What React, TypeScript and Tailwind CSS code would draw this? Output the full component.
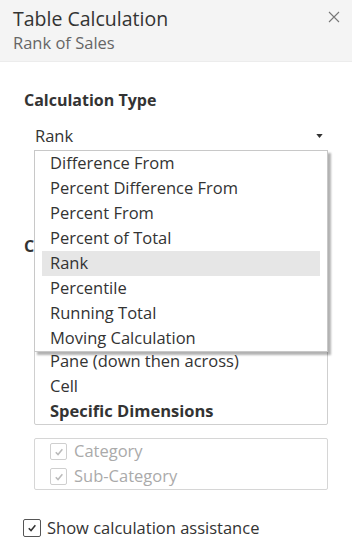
import { useState } from "react";

const types = [
    "Difference From",
    "Percent Difference From",
    "Percent From",
    "Percent of Total",
    "Rank",
    "Percentile",
    "Running Total",
    "Moving Calculation",
];

const computeUsing = [
    "Table (across)",
    "Table (down)",
    "Table (across then down)",
    "Table (down then across)",
    "Pane (across)",
    "Pane (down)",
    "Pane (across then down)",
    "Pane (down then across)",
    "Cell",
];

const Check = ({ className }: { className: string }) => (
    <svg viewBox="0 0 10 10" className={className} fill="none" stroke="currentColor" strokeWidth="1.3">
        <path d="M2.3 5.2 L4.2 7.1 L7.8 2.8" />
    </svg>
);

export default function App() {
    const [selected] = useState("Rank");
    const [assist, setAssist] = useState(true);

    return (
        <div className="w-[352px] h-[555px] bg-white text-[#333] font-['Open_Sans',sans-serif] overflow-hidden">
            <div className="h-[62px] bg-[#f4f4f4] border-b border-[#ececec] pl-[13px] pr-[8px] pt-[5px] flex justify-between">
                <div>
                    <div className="text-[19.5px] leading-[27px]">Table Calculation</div>
                    <div className="text-[16.5px] leading-[22px] text-[#666]">Rank of Sales</div>
                </div>
                <button className="w-[20px] h-[20px] mt-[2px] flex items-center justify-center text-[#777]">
                    <svg viewBox="0 0 12 12" className="w-[12px] h-[12px]" stroke="currentColor" strokeWidth="1.1">
                        <path d="M1 1 L11 11 M11 1 L1 11" />
                    </svg>
                </button>
            </div>

            <div className="px-[24px] pt-[27px]">
                <div className="text-[16px] font-bold leading-[22px]">Calculation Type</div>

                <div className="relative mt-[12px] ml-[10px]">
                    <div className="h-[26px] flex items-center justify-between pl-[1px] pr-[5px] text-[16.5px]">
                        <span>{selected}</span>
                        <svg viewBox="0 0 8 5" className="w-[7px] h-[4px] text-[#333]" fill="currentColor">
                            <path d="M0 0 H8 L4 5 Z" />
                        </svg>
                    </div>

                    <div className="absolute left-0 top-[27px] w-[294px] bg-white border border-[#c8c8c8] shadow-[3px_3px_2px_rgba(0,0,0,0.3)] px-[7px] z-10">
                        {types.map((t) => (
                            <div
                                key={t}
                                className={`h-[25px] flex items-center px-2 text-[16.5px] whitespace-nowrap ${t === selected ? "bg-[#e6e6e6]" : ""}`}
                            >
                                {t}
                            </div>
                        ))}
                    </div>
                </div>

                <div className="text-[16px] font-bold leading-[22px] mt-[86px]">Compute Using</div>

                <div className="ml-[10px] mt-[8px] h-[160px] border border-[#cfcfcf] rounded-[2px] overflow-hidden flex flex-col justify-end">
                    {computeUsing.map((c) => (
                        <div key={c} className="h-[25px] shrink-0 flex items-center px-[15px] text-[16.5px] whitespace-nowrap">
                            {c}
                        </div>
                    ))}
                    <div className="h-[25px] shrink-0 flex items-center px-[15px] text-[16.5px] font-bold">
                        Specific Dimensions
                    </div>
                </div>

                <div className="ml-[10px] mt-[13px] border border-[#d6d6d6] rounded-[2px] text-[#aaa]">
                    {["Category", "Sub-Category"].map((d) => (
                        <div key={d} className="h-[25px] flex items-center pl-[15px] gap-[7px] text-[16.5px]">
                            <span className="w-[17px] h-[17px] border border-[#cfcfcf] rounded-[2px] flex items-center justify-center text-[#bbb]">
                                <Check className="w-[12px] h-[12px]" />
                            </span>
                            {d}
                        </div>
                    ))}
                </div>

                <label className="mt-[26px] -ml-[1px] flex items-center gap-[6px] text-[16.5px] cursor-pointer">
                    <span
                        onClick={() => setAssist(!assist)}
                        className="w-[18px] h-[18px] border border-[#555] rounded-[2px] flex items-center justify-center text-[#333]"
                    >
                        {assist && <Check className="w-[12px] h-[12px]" />}
                    </span>
                    Show calculation assistance
                </label>
            </div>
        </div>
    );
}
